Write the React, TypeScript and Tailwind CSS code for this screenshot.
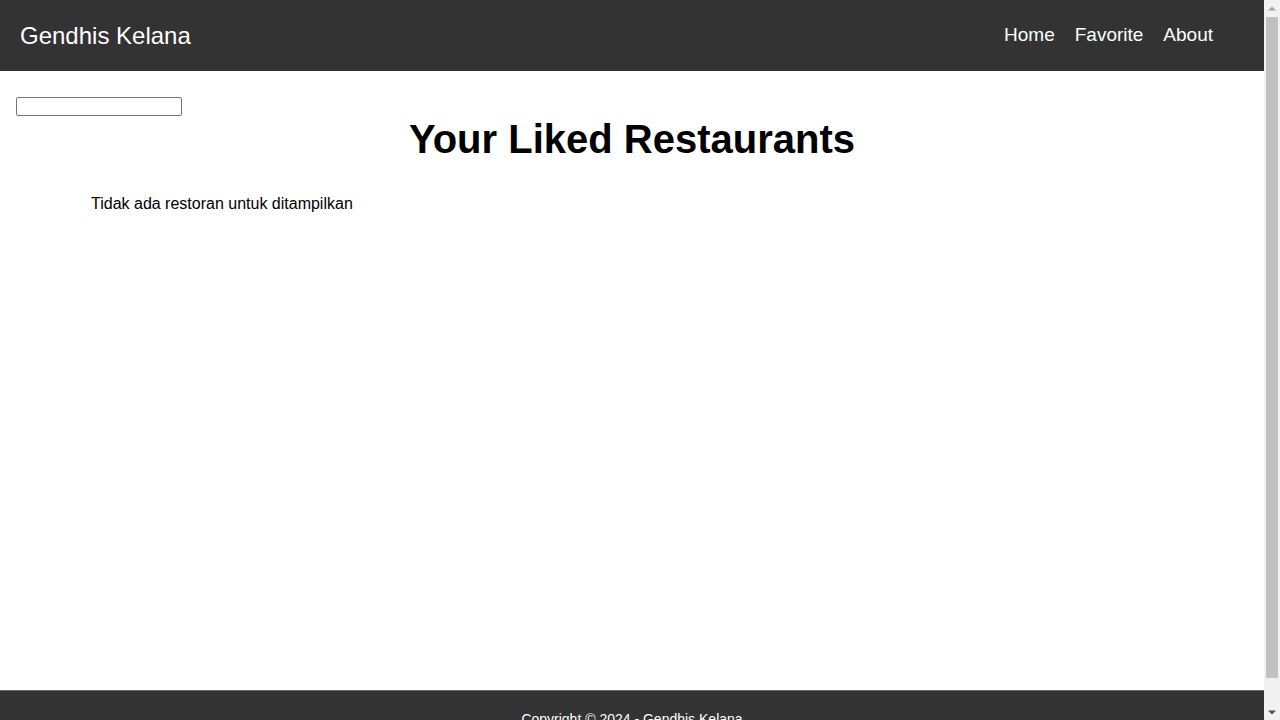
function Scrollbar() {
  return (
    <div className="flex h-screen w-4 shrink-0 flex-col bg-[#f1f1f1]">
      <div className="flex h-4 items-center justify-center">
        <svg width="8" height="5" viewBox="0 0 8 5">
          <polygon points="0,4.5 4,0.5 8,4.5" fill="#a3a3a3" />
        </svg>
      </div>
      <div className="mx-[2px] mt-[1px] h-[661px] bg-[#c1c1c1]" />
      <div className="flex-1" />
      <div className="flex h-4 items-center justify-center">
        <svg width="8" height="5" viewBox="0 0 8 5">
          <polygon points="0,0.5 8,0.5 4,4.5" fill="#505050" />
        </svg>
      </div>
    </div>
  );
}

export default function App() {
  return (
    <div className="flex h-screen overflow-hidden bg-white font-['Liberation_Sans',Arial,sans-serif] text-black">
      <div className="min-w-0 flex-1">
        <header className="flex h-[71px] items-center justify-between bg-[#333333] pl-5 pr-[51px] text-white">
          <a href="#" className="text-[24px] leading-none">
            Gendhis Kelana
          </a>
          <nav>
            <ul className="flex items-center gap-5 text-[19px]">
              <li>
                <a href="#">Home</a>
              </li>
              <li>
                <a href="#">Favorite</a>
              </li>
              <li>
                <a href="#">About</a>
              </li>
            </ul>
          </nav>
        </header>

        <main className="min-h-[619px] px-4 pt-[26px]">
          <input
            type="text"
            aria-label="search"
            className="block h-[19px] w-[166px] rounded-[2px] border border-[#767676] bg-white"
          />
          <h1 className="text-center text-[40px] font-bold leading-[46px]">Your Liked Restaurants</h1>
          <div className="pl-[75px] pt-[33px]">
            <p className="text-[16px] leading-[18px]">Tidak ada restoran untuk ditampilkan</p>
          </div>
        </main>

        <footer className="border-t border-[#6b6b6b] bg-[#333333] py-5 text-center text-[14px] leading-4 text-white">
          <p>Copyright © 2024 - Gendhis Kelana</p>
        </footer>
      </div>
      <Scrollbar />
    </div>
  );
}
